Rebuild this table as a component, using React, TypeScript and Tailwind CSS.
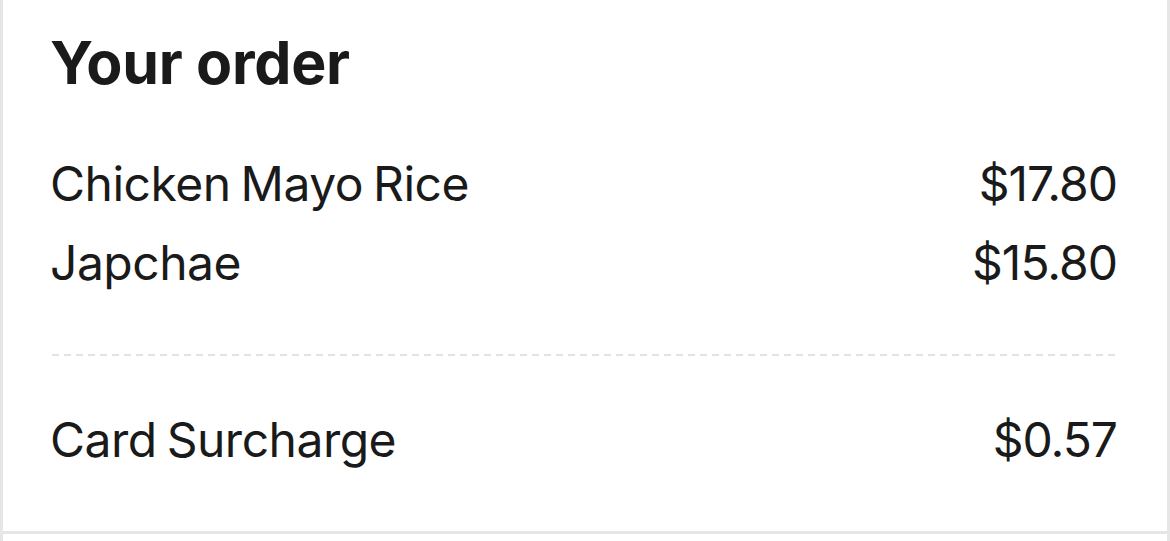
import React from 'react';

const items = [
  { name: 'Chicken Mayo Rice', price: '$17.80' },
  { name: 'Japchae', price: '$15.80' },
];

const Row = ({ name, price }: { name: string; price: string }) => (
  <div className="flex items-center justify-between h-[79px] font-['Inter',sans-serif] text-[48px] text-[#1a1a1a]">
    <span className="tracking-[-0.5px] [word-spacing:-3px]">{name}</span>
    <span className="tracking-[-1px]">{price}</span>
  </div>
);

export default function App() {
  return (
    <div className="w-[1170px] h-[541px] bg-white flex flex-col overflow-hidden">
      <div className="h-[531px] border-x-[3px] border-[#e6e6e6] pl-[47px] pr-[50px] flex flex-col">
        <h1 className="mt-[31px] font-['Inter',sans-serif] font-bold text-[59px] leading-[64px] tracking-[-0.3px] text-[#1a1a1a]">
          Your order
        </h1>
        <div className="mt-[49px] flex flex-col">
          {items.map((it) => (
            <Row key={it.name} {...it} />
          ))}
        </div>
        <div className="mt-[52px] ml-[2px] -mr-[2px] h-[2px] bg-[repeating-linear-gradient(to_right,#e2e2e2_0_7px,transparent_7px_12px)]" />
        <div className="mt-[44px]">
          <Row name="Card Surcharge" price="$0.57" />
        </div>
      </div>
      <div className="h-[3px] bg-[#e6e6e6]" />
      <div className="flex-1 border-x-[3px] border-[#e6e6e6]" />
    </div>
  );
}
